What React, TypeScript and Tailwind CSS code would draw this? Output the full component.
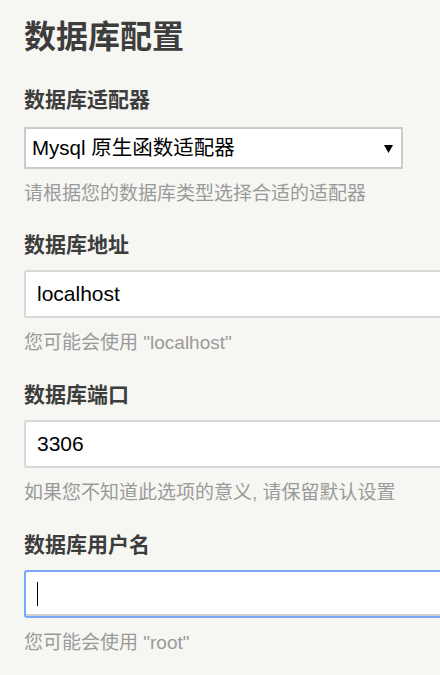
const FONT = { fontFamily: '"Liberation Sans", Arial, "Noto Sans CJK SC", sans-serif' };

function Label({ children }: { children: React.ReactNode }) {
  return <div className="text-[21px] leading-[28px] font-bold text-[#3d3d3d]">{children}</div>;
}

function Help({ children }: { children: React.ReactNode }) {
  return <div className="mt-3 text-[19px] leading-[26px] text-[#9a9a9a]">{children}</div>;
}

function TextBox({ value, focused }: { value?: string; focused?: boolean }) {
  return (
    <div
      className={`mt-[11px] w-[440px] h-12 rounded-[3px] bg-white flex items-center pl-[11px] text-[21px] text-black border-2 ${
        focused ? 'border-[#78a8f8] shadow-[inset_0_-2px_0_#cfcfcf]' : 'border-[#d8d8d8]'
      }`}
    >
      {focused ? <span className="inline-block w-px h-[24px] bg-black" /> : value}
    </div>
  );
}

export default function App() {
  return (
    <div className="min-h-[675px] w-[440px] overflow-hidden bg-[#f6f6f2] pl-6" style={FONT}>
      <h1 className="pt-[17px] text-[32px] leading-[40px] font-bold text-[#3d3d3d]">数据库配置</h1>

      <div className="mt-[29px]">
        <Label>数据库适配器</Label>
        <div className="relative mt-[13px] w-[379px] h-[42px] bg-white border-2 border-[#cbcbcb] flex items-center pl-[6px] text-[20.5px] text-black">
          Mysql 原生函数适配器
          <svg className="absolute right-[8px] top-[15px]" width="9" height="9" viewBox="0 0 9 9">
            <path d="M0 1h9L4.5 9z" fill="#000" />
          </svg>
        </div>
        <Help>请根据您的数据库类型选择合适的适配器</Help>
      </div>

      <div className="mt-6">
        <Label>数据库地址</Label>
        <TextBox value="localhost" />
        <Help>您可能会使用 "localhost"</Help>
      </div>

      <div className="mt-[25px]">
        <Label>数据库端口</Label>
        <TextBox value="3306" />
        <Help>如果您不知道此选项的意义, 请保留默认设置</Help>
      </div>

      <div className="mt-[25px]">
        <Label>数据库用户名</Label>
        <TextBox focused />
        <Help>您可能会使用 "root"</Help>
      </div>
    </div>
  );
}
